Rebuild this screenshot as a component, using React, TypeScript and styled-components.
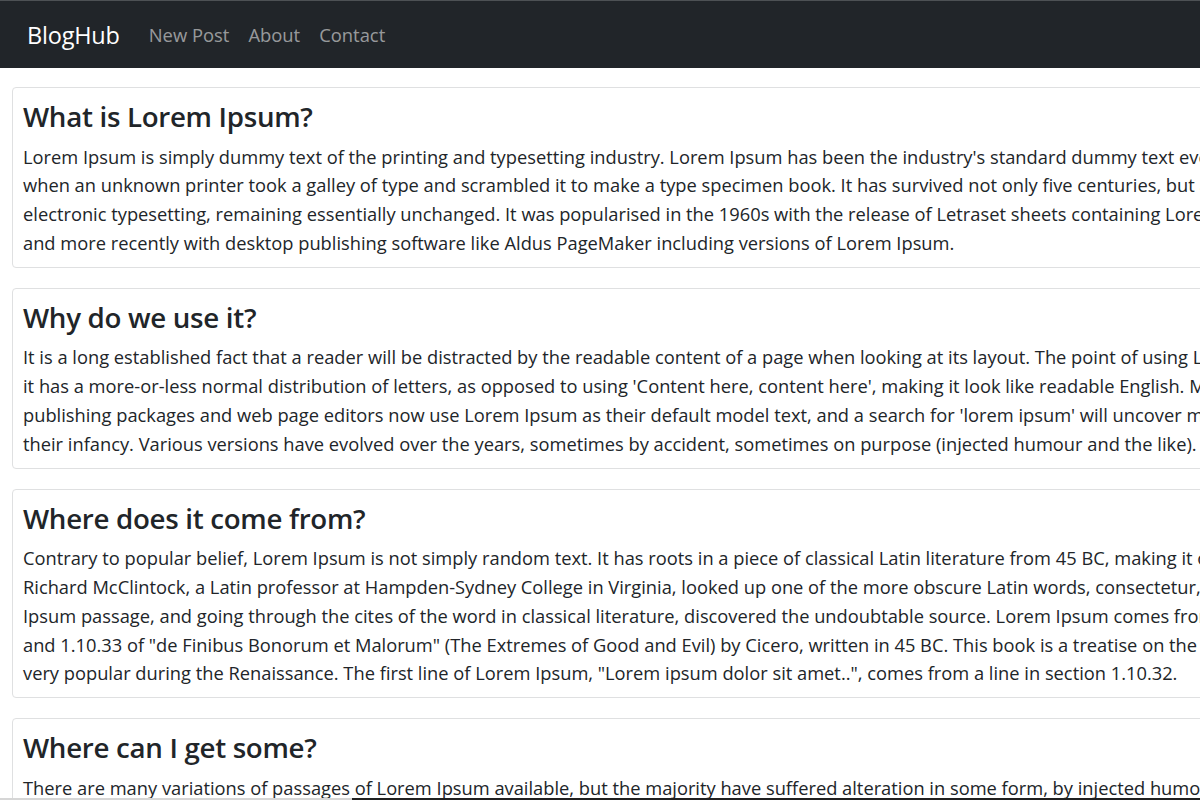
import React from 'react';
import styled, { createGlobalStyle } from 'styled-components';

const GlobalStyle = createGlobalStyle`
  html, body {
    margin: 0;
    padding: 0;
    overflow-x: hidden;
    background: #fff;
  }
  body {
    font-family: 'Open Sans', 'Noto Sans', sans-serif;
    color: #212529;
  }
`;

const Navbar = styled.nav`
  display: flex;
  align-items: center;
  height: 67px;
  padding: 0 27px;
  background: #212529;
  border-top: 1px solid #4d5154;
  gap: 29px;
`;

const Brand = styled.a`
  color: #fff;
  font-size: 23.5px;
  text-decoration: none;
  letter-spacing: -0.2px;
`;

const NavLinks = styled.div`
  display: flex;
  gap: 19px;
`;

const NavLink = styled.a`
  color: rgba(255, 255, 255, 0.55);
  font-size: 18.4px;
  text-decoration: none;
`;

const Main = styled.main`
  display: flex;
  flex-direction: column;
  gap: 20px;
  padding: 19px 12px;
`;

const Card = styled.article`
  width: 1700px;
  border: 1px solid #dfe0e1;
  border-radius: 4px;
  padding: 11px 10px 9px;
`;

const Title = styled.h4`
  margin: 0 0 8.6px;
  font-size: 27.7px;
  font-weight: 600;
  line-height: 35px;
  letter-spacing: -0.3px;
`;

const Body = styled.p`
  margin: 0;
  font-size: 18.3px;
  line-height: 28.8px;
`;

const Line = styled.span`
  display: block;
  white-space: nowrap;
`;

const ScrollTrack = styled.div`
  position: fixed;
  left: 0;
  right: 0;
  bottom: 0;
  height: 2px;
  display: flex;
  background: #d6d6d6;
`;

const ScrollThumb = styled.div`
  margin-left: 352px;
  flex: 1;
  background: #202020;
`;

const posts = [
  {
    title: 'What is Lorem Ipsum?',
    lines: [
      "Lorem Ipsum is simply dummy text of the printing and typesetting industry. Lorem Ipsum has been the industry's standard dummy text ever since the 1500s,",
      'when an unknown printer took a galley of type and scrambled it to make a type specimen book. It has survived not only five centuries, but also the leap into',
      'electronic typesetting, remaining essentially unchanged. It was popularised in the 1960s with the release of Letraset sheets containing Lorem Ipsum passages,',
      'and more recently with desktop publishing software like Aldus PageMaker including versions of Lorem Ipsum.',
    ],
  },
  {
    title: 'Why do we use it?',
    lines: [
      'It is a long established fact that a reader will be distracted by the readable content of a page when looking at its layout. The point of using Lorem Ipsum is that',
      "it has a more-or-less normal distribution of letters, as opposed to using 'Content here, content here', making it look like readable English. Many desktop",
      "publishing packages and web page editors now use Lorem Ipsum as their default model text, and a search for 'lorem ipsum' will uncover many web sites still in",
      'their infancy. Various versions have evolved over the years, sometimes by accident, sometimes on purpose (injected humour and the like).',
    ],
  },
  {
    title: 'Where does it come from?',
    lines: [
      'Contrary to popular belief, Lorem Ipsum is not simply random text. It has roots in a piece of classical Latin literature from 45 BC, making it over 2000 years old.',
      'Richard McClintock, a Latin professor at Hampden-Sydney College in Virginia, looked up one of the more obscure Latin words, consectetur, from a Lorem',
      'Ipsum passage, and going through the cites of the word in classical literature, discovered the undoubtable source. Lorem Ipsum comes from sections 1.10.32',
      'and 1.10.33 of "de Finibus Bonorum et Malorum" (The Extremes of Good and Evil) by Cicero, written in 45 BC. This book is a treatise on the theory of ethics,',
      'very popular during the Renaissance. The first line of Lorem Ipsum, "Lorem ipsum dolor sit amet..", comes from a line in section 1.10.32.',
    ],
  },
  {
    title: 'Where can I get some?',
    lines: [
      "There are many variations of passages of Lorem Ipsum available, but the majority have suffered alteration in some form, by injected humour, or randomised words",
      "which don't look even slightly believable. If you are going to use a passage of Lorem Ipsum, you need to be sure there isn't anything embarrassing hidden in",
      'the middle of text. All the Lorem Ipsum generators on the Internet tend to repeat predefined chunks as necessary, making this the first true generator on the',
      'Internet. It uses a dictionary of over 200 Latin words, combined with a handful of model sentence structures, to generate Lorem Ipsum which looks reasonable.',
    ],
  },
];

export default function App() {
  return (
    <>
      <GlobalStyle />
      <Navbar>
        <Brand href="#">BlogHub</Brand>
        <NavLinks>
          <NavLink href="#">New Post</NavLink>
          <NavLink href="#">About</NavLink>
          <NavLink href="#">Contact</NavLink>
        </NavLinks>
      </Navbar>
      <Main>
        {posts.map((post) => (
          <Card key={post.title}>
            <Title>{post.title}</Title>
            <Body>
              {post.lines.map((line, i) => (
                <Line key={i}>{line}</Line>
              ))}
            </Body>
          </Card>
        ))}
      </Main>
      <ScrollTrack>
        <ScrollThumb />
      </ScrollTrack>
    </>
  );
}
